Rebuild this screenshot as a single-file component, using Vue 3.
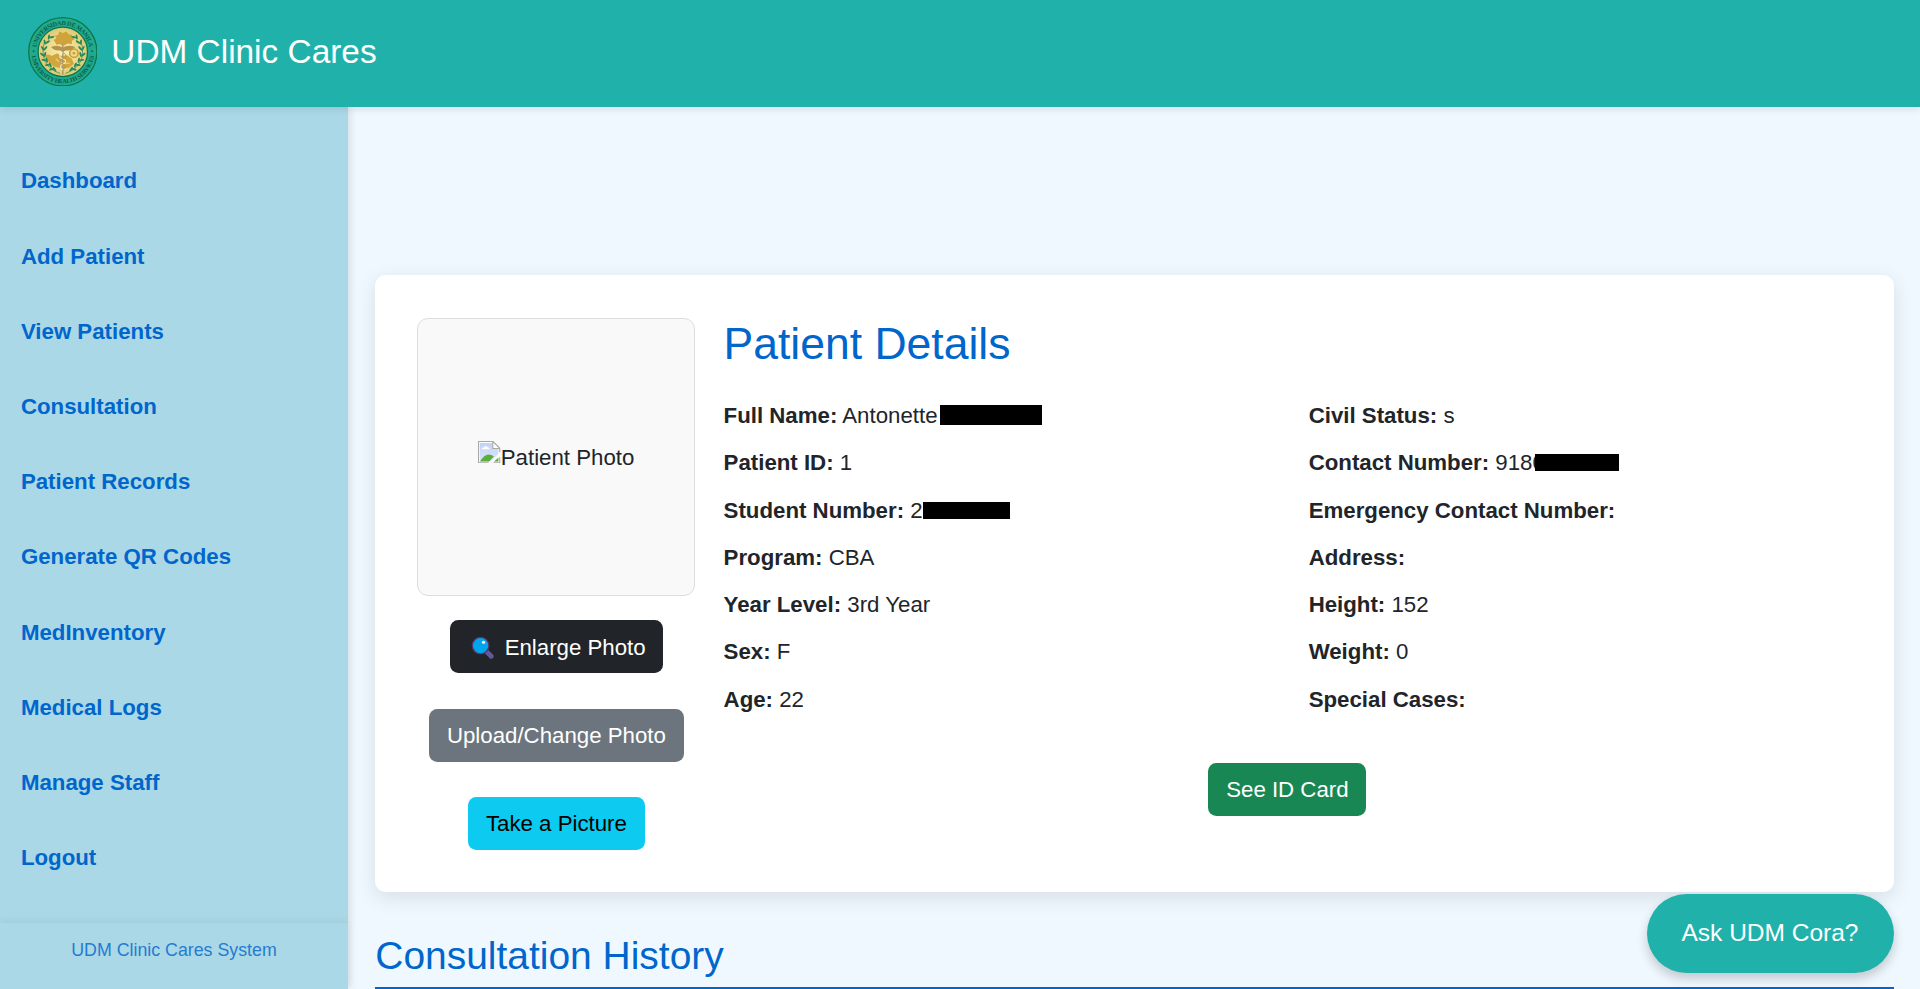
<script setup>
const navItems = [
  'Dashboard', 'Add Patient', 'View Patients', 'Consultation', 'Patient Records',
  'Generate QR Codes', 'MedInventory', 'Medical Logs', 'Manage Staff', 'Logout',
]

const personal = [
  { label: 'Full Name:', value: 'Antonette', mask: 'mask-name' },
  { label: 'Patient ID:', value: '1' },
  { label: 'Student Number:', value: '2', mask: 'mask-student' },
  { label: 'Program:', value: 'CBA' },
  { label: 'Year Level:', value: '3rd Year' },
  { label: 'Sex:', value: 'F' },
  { label: 'Age:', value: '22' },
]

const contact = [
  { label: 'Civil Status:', value: 's' },
  { label: 'Contact Number:', value: '9180', mask: 'mask-contact' },
  { label: 'Emergency Contact Number:', value: '' },
  { label: 'Address:', value: '' },
  { label: 'Height:', value: '152' },
  { label: 'Weight:', value: '0' },
  { label: 'Special Cases:', value: '' },
]

const columns = [personal, contact]

// Leaf positions along the two laurel branches of the seal
const leaves = [
  [22, 62, -50], [19.5, 54, -25], [20, 45, 0], [23, 36, 20], [27, 69, -65], [33, 75, -75], [29, 29, 40],
]
</script>

<template>
  <div class="page">
    <header class="topbar">
      <svg class="seal" viewBox="0 0 100 100">
        <defs>
          <radialGradient id="gold">
            <stop offset="0" stop-color="#f8efb8" />
            <stop offset="0.6" stop-color="#eddb8e" />
            <stop offset="1" stop-color="#dcc870" />
          </radialGradient>
          <path id="arcTop" d="M11.5 50a38.5 38.5 0 0 1 77 0" />
          <path id="arcBottom" d="M4.8 50a45.2 45.2 0 0 0 90.4 0" />
        </defs>
        <circle cx="50" cy="50" r="49" fill="#1fa98f" stroke="#08774d" stroke-width="1.8" />
        <circle cx="50" cy="50" r="46.8" fill="none" stroke="#35aa78" stroke-width="0.8" />
        <circle cx="50" cy="50" r="35.5" fill="url(#gold)" stroke="#08774d" stroke-width="1.8" />
        <text class="seal-text"><textPath href="#arcTop" startOffset="50%" text-anchor="middle" textLength="108">UNIVERSIDAD DE MANILA</textPath></text>
        <text class="seal-text"><textPath href="#arcBottom" startOffset="50%" text-anchor="middle" textLength="130">UNIVERSITY HEALTH SERVICES</textPath></text>
        <circle cx="8" cy="49" r="1.3" fill="#075f45" />
        <circle cx="92" cy="49" r="1.3" fill="#075f45" />
        <path d="M37 33l4-3-3-3 5-1 2-5 5 2 5-2 4 4 4 0 0 4 4 3-4 2 0 5-6-1-5 3-6-2-5 1z" fill="#d0a43a" />
        <path d="M25 55q5-3 9 1l8-4 6 4 8-1 7 5 3 7-7 6-10 1-12-3-7-6-5-4z" fill="#d2a63e" />
        <path d="M40 60q6 8 20 6" fill="none" stroke="#ecd78a" stroke-width="1.6" />
        <circle cx="66" cy="52" r="6" fill="#eddb8e" stroke="#cf9f34" stroke-width="2.4" />
        <circle cx="66" cy="52" r="2" fill="#cf9f34" />
        <path d="M33 43q10-4 17 1q7-5 18-1-6 6-14 5l-4 2-4-2q-8 1-13-5z" fill="#b8934a" />
        <path d="M50 40v43" stroke="#a89768" stroke-width="2" />
        <path d="M50 51c-6 3-6 7 0 9s5 6 0 8-4 5 0 8" fill="none" stroke="#f5edc2" stroke-width="1.5" />
        <path d="M50 51c6 3 6 7 0 9s-5 6 0 8 4 5 0 8" fill="none" stroke="#b08c48" stroke-width="1.2" />
        <circle cx="50" cy="39" r="2.4" fill="#c1a056" />
        <g fill="none" stroke="#27885a" stroke-width="1">
          <path d="M46 81Q14 70 24 34" />
          <path d="M54 81Q86 70 76 34" />
        </g>
        <g fill="#27885a">
          <template v-for="(leaf, i) in leaves" :key="i">
            <ellipse :cx="leaf[0] + 5" :cy="leaf[1]" rx="1.4" ry="4" :transform="`rotate(${leaf[2] + 40} ${leaf[0] + 5} ${leaf[1]})`" />
            <ellipse :cx="leaf[0] + 1" :cy="leaf[1]" rx="1.4" ry="3.8" :transform="`rotate(${leaf[2] - 30} ${leaf[0] + 1} ${leaf[1]})`" />
            <ellipse :cx="95 - leaf[0]" :cy="leaf[1]" rx="1.4" ry="4" :transform="`rotate(${-leaf[2] - 40} ${95 - leaf[0]} ${leaf[1]})`" />
            <ellipse :cx="99 - leaf[0]" :cy="leaf[1]" rx="1.4" ry="3.8" :transform="`rotate(${-leaf[2] + 30} ${99 - leaf[0]} ${leaf[1]})`" />
          </template>
        </g>
      </svg>
      <span class="brand">UDM Clinic Cares</span>
    </header>

    <div class="body">
      <aside class="sidebar">
        <nav>
          <a v-for="item in navItems" :key="item">{{ item }}</a>
        </nav>
        <footer class="side-footer"><span>UDM Clinic Cares System</span></footer>
      </aside>

      <main class="main">
        <section class="card">
          <div class="photo-col">
            <div class="photo">
              <svg class="broken" viewBox="0 0 16 16">
                <defs>
                  <linearGradient id="sky" x1="0" y1="0" x2="0" y2="1">
                    <stop offset="0" stop-color="#c1d3f7" />
                    <stop offset="1" stop-color="#dce6fb" />
                  </linearGradient>
                </defs>
                <path d="M.5.5h10.2l4.8 4.8v4.4L9.7 15.5H.5z" fill="#fff" />
                <path d="M1.4 1.4h9v4.2h4.2v4.2L9 14.8H1.4z" fill="url(#sky)" />
                <path d="M2.6 6q.3-1.5 1.6-1.3 1.2-2.6 2.8-.2 1.5 0 1.3 1.5z" fill="#fff" />
                <path d="M1.4 14.8q3-5.2 6.2-5.2 2.4 0 3.8 1.5l-3.4 3.7z" fill="#5aae3c" />
                <path d="M11.4 14.8l3.2-2.8v2.8z" fill="#5aae3c" />
                <path d="M15.6 10.2l-5.6 5.6H8l7.6-7.6z" fill="#f9f9f9" />
                <path d="M7.6 15.6H.4V.4h10.4l4.8 4.8v2.8M10.6.6v4.8h4.8M11.2 15.6h4.4v-4" fill="none" stroke="#a8a8a8" stroke-width=".8" />
              </svg>
              <span>Patient Photo</span>
            </div>
            <button class="btn dark">
              <svg class="lens" viewBox="0 0 24 24">
                <path d="M16 16l4.6 4.6" stroke="#635994" stroke-width="5" stroke-linecap="round" />
                <circle cx="9.8" cy="9.8" r="8.5" fill="#00a6ed" stroke="#533566" stroke-width="1.3" />
                <circle cx="12.8" cy="6.4" r="1.6" fill="#fff" />
              </svg>
              Enlarge Photo
            </button>
            <button class="btn gray">Upload/Change Photo</button>
            <button class="btn info">Take a Picture</button>
          </div>

          <div class="details">
            <h2>Patient Details</h2>
            <div class="columns">
              <div v-for="(col, c) in columns" :key="c">
                <p v-for="row in col" :key="row.label"><strong>{{ row.label }}</strong> {{ row.value }}<span v-if="row.mask" class="mask" :class="row.mask"></span></p>
              </div>
            </div>
            <div class="card-action"><button class="btn green">See ID Card</button></div>
          </div>
        </section>

        <h3>Consultation History</h3>
      </main>
    </div>

    <button class="chat">Ask UDM Cora?</button>
  </div>
</template>

<style>
body {
  margin: 0;
  overflow: hidden;
}
</style>

<style scoped>
.page {
  position: relative;
  display: flex;
  flex-direction: column;
  height: 989px;
  overflow: hidden;
  background: #f0f8ff;
  color: #212529;
  font: 22.26px/33.4px Arial, "Liberation Sans", sans-serif;
}
.page * { box-sizing: border-box; }
.topbar {
  position: relative;
  z-index: 2;
  display: flex;
  flex: none;
  align-items: center;
  height: 107px;
  padding: 0 27.8px 4px;
  gap: 13.9px;
  background: #20b2aa;
  box-shadow: 0 2.8px 7px rgba(0, 0, 0, 0.1);
}
.seal { width: 69.6px; height: 69.6px; }
.seal-text {
  font: 700 8.8px "Liberation Serif", serif;
  fill: #075f45;
}
.brand {
  color: #fff;
  font-size: 33.4px;
  line-height: 50px;
}
.body {
  display: flex;
  flex: 1;
  min-height: 0;
}
.sidebar {
  position: relative;
  z-index: 1;
  display: flex;
  flex: none;
  flex-direction: column;
  justify-content: space-between;
  width: 348px;
  padding-top: 36.5px;
  background: #abd8e6;
  box-shadow: 2.8px 0 7px rgba(0, 0, 0, 0.1);
}
nav a {
  display: block;
  padding: 20.9px;
  color: #06c;
  font-weight: 700;
}
.side-footer {
  height: 66.3px;
  padding-top: 13.9px;
  color: #06c;
  box-shadow: 0 -2.8px 7px rgba(0, 0, 0, 0.05);
  font-size: 17.8px;
  line-height: 26.7px;
  text-align: center;
}
.side-footer span { opacity: 0.8; }
.main {
  flex: 1;
  padding: 168px 26.3px 0 27.3px;
}
.card {
  display: flex;
  gap: 28.2px;
  height: 617px;
  margin-bottom: 41px;
  padding: 43px 42.5px 43px 42.1px;
  border-radius: 11px;
  background: #fff;
  box-shadow: 0 5.6px 20px rgba(0, 0, 0, 0.1);
}
.photo-col {
  display: flex;
  flex: none;
  flex-direction: column;
  align-items: center;
  width: 278px;
}
.photo {
  display: flex;
  flex: none;
  align-items: center;
  justify-content: center;
  width: 278px;
  height: 278px;
  margin-bottom: 24.3px;
  padding-top: 1px;
  border: 1px solid #ddd;
  border-radius: 11px;
  background: #f9f9f9;
}
.broken {
  width: 22.3px;
  height: 22.3px;
  margin-bottom: 11px;
}
.btn {
  display: inline-flex;
  flex: none;
  align-items: center;
  height: 52.5px;
  padding: 0 17.8px;
  border: 0;
  border-radius: 8.3px;
  color: #fff;
  font: inherit;
  white-space: nowrap;
}
.dark {
  gap: 10px;
  height: 53px;
  padding: 1px 17px 0 21px;
  background: #212529;
}
.lens { width: 23.5px; height: 23.5px; }
.gray {
  margin-top: 35.8px;
  background: #6c757d;
}
.info {
  margin-top: 35.6px;
  background: #0dcaf0;
  color: #000;
}
.green {
  height: 53px;
  background: #198754;
}
.details { flex: 1; }
h2, h3 {
  margin: 0;
  color: #06c;
  font-weight: 400;
}
h2 {
  margin: -1px 0 28.6px;
  font-size: 44.5px;
  line-height: 53.4px;
}
.columns {
  display: grid;
  grid-template-columns: 1fr 1fr;
  column-gap: 42.5px;
}
p {
  margin: 0 0 13.9px;
  white-space: nowrap;
}
.mask {
  display: inline-block;
  background: #000;
}
.mask-name {
  width: 102px;
  height: 20px;
  margin-left: 2.5px;
  vertical-align: -2px;
}
.mask-student {
  width: 87px;
  height: 17px;
  vertical-align: -1px;
}
.mask-contact {
  width: 84px;
  height: 17px;
  margin-left: -9.5px;
  vertical-align: -1px;
}
.card-action {
  margin-top: 33px;
  text-align: center;
}
h3 {
  padding-bottom: 7px;
  border-bottom: 2.8px solid #06c;
  font-size: 38.95px;
  line-height: 46.7px;
}
.chat {
  position: absolute;
  right: 26px;
  bottom: 16.5px;
  z-index: 3;
  width: 247px;
  height: 79px;
  padding: 0 1px 0 0;
  border: 0;
  border-radius: 40px;
  background: #20b2aa;
  box-shadow: 0 5.6px 11px rgba(0, 0, 0, 0.2);
  color: #fff;
  font: 24.5px Arial, "Liberation Sans", sans-serif;
}
</style>
